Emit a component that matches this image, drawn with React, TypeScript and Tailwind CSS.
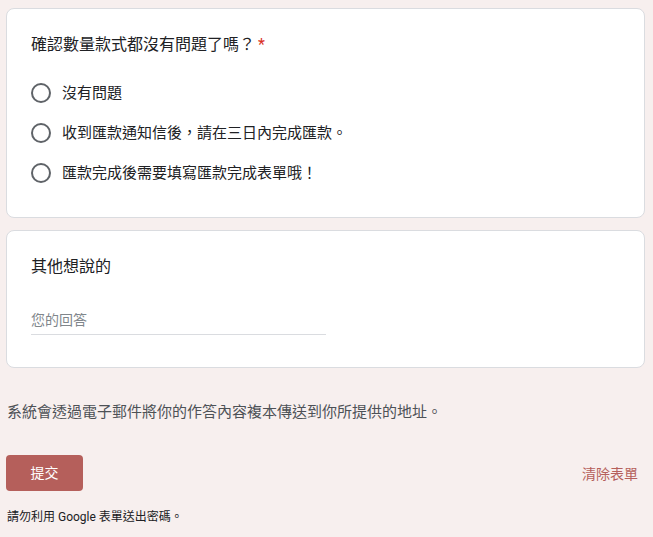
import React, { useState } from 'react';

const FONT = "font-['Roboto','Noto_Sans_CJK_TC',sans-serif]";

const options = [
  '沒有問題',
  '收到匯款通知信後，請在三日內完成匯款。',
  '匯款完成後需要填寫匯款完成表單哦！',
];

const App: React.FC = () => {
  const [picked, setPicked] = useState<number | null>(null);
  const [answer, setAnswer] = useState('');

  return (
    <div className={`min-h-[537px] bg-[#f7efee] pl-[6px] pr-[8px] pt-[8px] pb-[10px] ${FONT}`}>
      {/* Question 1 */}
      <div className="bg-white border border-[#dadce0] rounded-[8px] px-[24px] pt-[24px] pb-[24px]">
        <div className="text-[16px] leading-[24px] text-[#202124]">
          確認數量款式都沒有問題了嗎？
          <span className="text-[#d93025] ml-[3px]">*</span>
        </div>
        <div className="mt-[16px] flex flex-col">
          {options.map((o, i) => (
            <label key={i} className="h-[40px] flex items-center cursor-pointer" onClick={() => setPicked(i)}>
              <span className="w-[20px] h-[20px] rounded-full border-2 border-[#5f6368] flex items-center justify-center shrink-0">
                {picked === i && <span className="w-[10px] h-[10px] rounded-full bg-[#b55f5b]" />}
              </span>
              <span className="ml-[11px] text-[15px] leading-[20px] text-[#202124]">{o}</span>
            </label>
          ))}
        </div>
      </div>

      {/* Question 2 */}
      <div className="mt-[12px] bg-white border border-[#dadce0] rounded-[8px] px-[24px] pt-[24px] pb-[32px]">
        <div className="text-[16px] leading-[24px] text-[#202124]">其他想說的</div>
        <div className="mt-[29px] w-[295px] border-b border-[#dadce0] pb-[2px]">
          <input
            value={answer}
            onChange={e => setAnswer(e.target.value)}
            placeholder="您的回答"
            className="w-full text-[14px] leading-[20px] h-[20px] outline-none text-[#202124] placeholder:text-[#80868b] bg-transparent"
          />
        </div>
      </div>

      <div className="mt-[33px] text-[15px] leading-[22px] text-[#4d5156] pl-[1px]">
        系統會透過電子郵件將你的作答內容複本傳送到你所提供的地址。
      </div>

      <div className="mt-[32px] flex items-center justify-between">
        <button className="w-[77px] h-[36px] rounded-[4px] bg-[#b55f5b] text-white text-[14px]">提交</button>
        <button className="text-[14px] text-[#b55f5b] mr-[7px] mt-[2px]">清除表單</button>
      </div>

      <div className="mt-[18px] text-[12px] leading-[16px] text-[#202124] pl-[1px]">
        請勿利用 Google 表單送出密碼。
      </div>
    </div>
  );
};

export default App;
